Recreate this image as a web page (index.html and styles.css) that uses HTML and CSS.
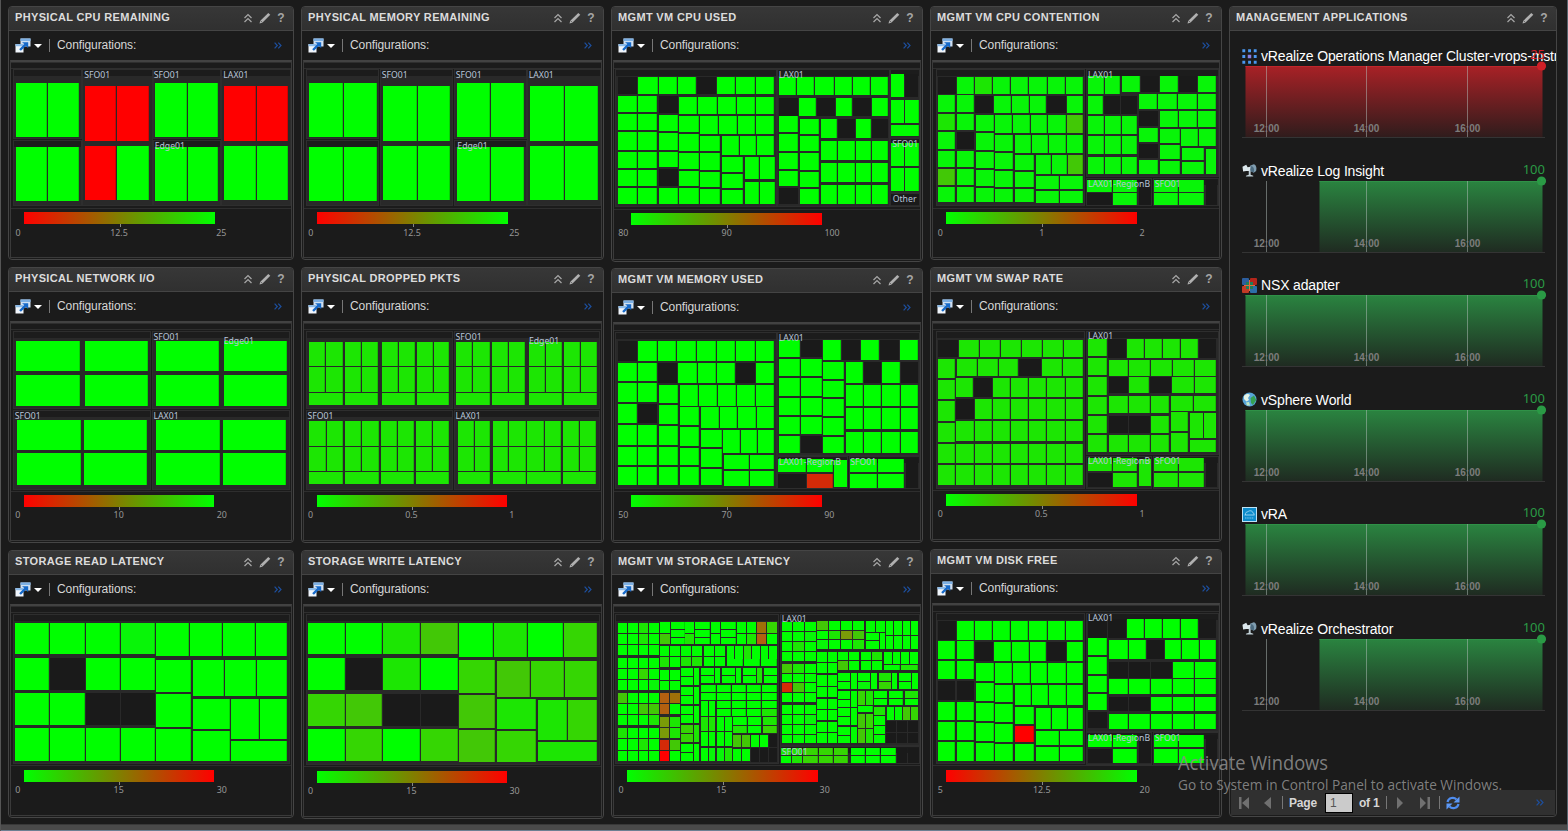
FILE: index.html
```html
<!DOCTYPE html>
<html lang="en">
<head>
<meta charset="utf-8">
<title>Management Cluster Dashboard</title>
<link rel="stylesheet" href="styles.css">
</head>
<body>
<svg class="defs" width="0" height="0">
  <symbol id="i-up" viewBox="0 0 10 10"><path d="M1.5 5 5 1.6 8.5 5M1.5 9 5 5.6 8.5 9" fill="none" stroke="#a6a6a6" stroke-width="1.3"/></symbol>
  <symbol id="i-pen" viewBox="0 0 12 12"><path d="M.5 11.5 1.3 8.800 9.300.9 11.3 2.700 3.300 10.700Z" fill="#b0b0b0"/><path d="M1.5 8.6 3.5 10.5" stroke="#555" stroke-width=".8"/></symbol>
  <symbol id="i-win" viewBox="0 0 16 15"><path d="M5.5.5h10v8h-10z" fill="#cfe0f2"/><path d="M5.5.5h10v2.6h-10z" fill="#7db0e4"/><path d="M.5 6h8v8.5h-8z" fill="#f1f6fc"/><path d="M.5 6h8v2.2h-8z" fill="#8dbbe8"/><path d="M4.2 11.3 9.3 6 7 4.2h6.2v6L11 7.800 5.900 12.800Z" fill="#1669c9"/></symbol>
  <symbol id="i-more" viewBox="0 0 8 7"><path d="M.6.6 3.300 3.500.6 6.400M4.300.6 7 3.500 4.300 6.400" fill="none" stroke="#1d4f9e" stroke-width="1.200"/></symbol>
  <symbol id="i-grid" viewBox="0 0 13 13"><g fill="#4a97ee"><path d="M.3.3h2.500v2.500H.3zM5.300.3h2.500v2.500H5.300zM10.200.3h2.500v2.500h-2.500zM.3 5.300h2.500v2.500H.3zM10.200 5.300h2.500v2.500h-2.500zM.3 10.200h2.500v2.500H.3zM5.300 10.200h2.500v2.500H5.300zM10.200 10.200h2.500v2.500h-2.500z"/></g><path d="M5 5h3v3H5z" fill="#8a7fe0"/></symbol>
  <symbol id="i-dish" viewBox="0 0 16 14"><path d="M8.500 2 12.500.3C15 1 16 4 15 7.500L12.500 9.500 8 7Z" fill="#7f9db0"/><path d="M9 2.500C12 2 13.500 4.500 12.500 9L8.500 7.500Z" fill="#4d6c80"/><path d="M.5 3 4.500.800 6 3.500 9 3 8.500 7.500 4.500 7.500 1.200 8Z" fill="#dce7ec"/><path d="M7.200 7h2v4.500l2.800 1.200v.800H4.200v-.800l3-1.200Z" fill="#c2d1d8"/></symbol>
  <symbol id="i-nsx" viewBox="0 0 15 15"><rect width="7" height="7" rx="1" fill="#2c5e9e"/><rect x="8" width="7" height="7" rx="1" fill="#b3261b"/><rect y="8" width="7" height="7" rx="1" fill="#c33a25"/><rect x="8" y="8" width="7" height="7" rx="1" fill="#2d6fa8"/><path d="M4 4h7v7H4z" fill="#1f7f58"/><path d="M7.500 2v11M2 7.500h11" stroke="#e26a3c" stroke-width="1"/></symbol>
  <symbol id="i-globe" viewBox="0 0 15 15"><circle cx="7.500" cy="7.500" r="7" fill="#58a5d8"/><path d="M2 4C4 1.500 7 1.500 8 3L6 6 7 8 4.500 9.500 2 7Z" fill="#e5f3e6"/><path d="M8.500 6 12 3.500 14.200 8 11 13 9 11Z" fill="#35a053"/><path d="M4 10.500 7 10 8 13.500 5 13.500Z" fill="#bfe5c4"/></symbol>
  <symbol id="i-vra" viewBox="0 0 15 15"><rect x=".5" y=".5" width="14" height="14" fill="#0d8bca" stroke="#bfe3f5"/><path d="M2.500 8h10M3.500 8C3 5.500 5 4.600 6 4.800 7.500 2.800 11 4 10.800 5.800 12.500 6 12 8 12 8" fill="none" stroke="#9fd8f3" stroke-width=".9"/><path d="M3 11h9" stroke="#7cc5ea" stroke-dasharray="1.500 .7"/></symbol>
</svg>
<main class="dash" id="dash"></main>
<div class="watermark">
  <svg width="340" height="50">
    <text x="0" y="20.500" font-size="19.500" textLength="150" lengthAdjust="spacingAndGlyphs">Activate Windows</text>
    <text x="0" y="40.500" font-size="14" textLength="324" lengthAdjust="spacingAndGlyphs">Go to System in Control Panel to activate Windows.</text>
  </svg>
</div>
<script src="app.js"></script>
</body>
</html>
```
FILE: styles.css
```css
* { box-sizing: border-box; }
body {
  margin: 0;
  height: 831px;
  overflow: hidden;
  background: #1b1b1b;
  border-left: 1px solid #555;
  border-right: 1px solid #55646e;
  font-family: "Liberation Sans", Arial, sans-serif;
  display: flex;
  flex-direction: column;
  position: relative;
}
body::after {
  content: "";
  height: 5px;
  background: #4a4a4a;
  border-top: 1px solid #383838;
  border-bottom: 1px solid #6d7f92;
}
.defs { position: absolute; }
.dash {
  flex: 1;
  padding: 6px 0 0 7px;
  display: grid;
  grid-template-columns: 286px 303px 312px 292px 328px;
  column-gap: 7px;
  align-items: start;
  min-height: 0;
}
.column { display: flex; flex-direction: column; }
.panel {
  border: 1px solid #454545;
  border-radius: 4px;
  background: #1b1b1b;
  display: flex;
  flex-direction: column;
  overflow: hidden;
}
.head {
  height: 24px;
  flex: none;
  padding: 0 8px 3px 6px;
  background: linear-gradient(#373737, #303030);
  border-bottom: 1px solid #444;
  display: flex;
  align-items: center;
}
.title { flex: 1; font-size: 11px; font-weight: bold; letter-spacing: .34px; color: #dcdcdc; white-space: nowrap; }
.tools { display: flex; align-items: center; gap: 6px; padding-top: 1px; }
.help { font-size: 12px; font-weight: bold; line-height: 12px; color: #a6a6a6; width: 8px; text-align: center; }
.bar {
  height: 29px;
  flex: none;
  padding: 0 11px 1px 6px;
  display: flex;
  align-items: center;
  color: #d6d6d6;
  font-size: 12px;
  letter-spacing: -.1px;
}
.caret { margin: 2px 0 0 3px; border: 4px solid transparent; border-top-color: #fff; border-bottom: 0; }
.sep { width: 1px; height: 13px; margin: 0 6px 0 7px; background: #777; }
.bar .sep { margin-right: 7px; }
.grow { flex: 1; }
.chart {
  flex: 1;
  margin: 0 1px 1px;
  min-height: 0;
  border: 1px solid #3a3a3a;
  border-top: 2px solid #424242;
  overflow: hidden;
}
.chart svg { display: block; }
.map-label { font: 8.7px "Noto Sans", sans-serif; fill: #b9c6da; }
.axis { font: 8.9px "Noto Sans", sans-serif; fill: #979797; text-anchor: middle; }
.apps { height: 811px; }
.app-list { flex: 1; padding: 14px 0 0 12px; min-height: 0; }
.app { height: 114.5px; }
.app-head { height: 21px; padding-top: 1px; display: flex; align-items: center; gap: 4px; color: #fff; font-size: 14px; letter-spacing: -.15px; white-space: nowrap; position: relative; }
.app-head svg { flex: none; }
.score { position: absolute; top: 0; left: 240px; width: 63px; text-align: right; font: 13px/18px "Noto Sans", sans-serif; letter-spacing: 0; color: #2a9a45; }
.score.bad { color: #d3212b; }
.app-chart { display: block; overflow: visible; }
.time { font-size: 10px; font-weight: bold; fill: #7c7c7c; text-anchor: middle; }
.pager {
  height: 25px;
  flex: none;
  margin: 0 1px 1px;
  padding: 0 11px 0 7px;
  background: #303030;
  display: flex;
  align-items: center;
  color: #d6d6d6;
  font-size: 12px;
  font-weight: bold;
  letter-spacing: -.2px;
}
.page-box { width: 28px; height: 20px; margin: 0 6px 0 8px; padding: 2px 4px; background: #cbcbcb; border: 1px solid #000; color: #555; font-weight: normal; }
.pager .sep { margin: 0 6px 0 8px; }
.watermark { position: absolute; left: 1177px; top: 749px; font-family: "Open Sans", sans-serif; pointer-events: none; }
.watermark text { fill: #8c8c8c; fill-opacity: .9; }
```
FILE: app.js
```js
// Heat-map cell colours by key.
const COLORS = {
  g: '#00ff00', n: '#08f508', h: '#1ce603', p: '#35d603', o: '#42c806',
  x: '#7a9c08', v: '#a07008', u: '#b26010', d: '#d42a08', r: '#ff0000', k: '#1a1a1a'
};

// A widget's cells are listed one strip per line:
//   R top bottom edges... keys   a row of cells
//   C left right edges... keys   a column of cells
//   G left top right bottom columns rows keys   an even grid
//   F left top right bottom      a group frame
// ox/oy is the origin and sx the number of units per pixel across (3 down).
const W = [
 [
  { t:'PHYSICAL CPU REMAINING', x:8,y:6,w:286,h:254, ox:0,oy:0,sx:3, line:625,
    l:[[253,232,'SFO01'],[461,232,'SFO01'],[670,232,'LAX01'],[464,446,'Edge01']],
    s:[71,645,637,'r','0',54,'12.5',357,'25',664,706],
    c:`F 38 207 243 415;F 38 420 243 615;F 247 207 455 615;F 459 207 660 415;F 459 420 660 615;F 664 207 870 615
R 249 411 48 145 241 gg;R 441 603 48 145 241 gg;R 258 423 256 352 450 rr;R 438 601 256 352 450 rg
R 249 411 466 564 658 gg;R 441 603 466 564 658 gg;R 258 423 671 771 867 rr;R 438 601 671 771 867 gg` },
  { t:'PHYSICAL NETWORK I/O', x:8,y:267,w:286,h:276, ox:0,oy:262,sx:2.579, line:686,
    l:[[396,231,'SFO01'],[577,243,'Edge01'],[38,469,'SFO01'],[396,469,'LAX01']],
    s:[61,553,699,'r','0',46,'10',306,'20',572,768],
    c:`F 34 206 388 438;F 391 206 746 438;F 34 443 388 680;F 391 443 746 680
R 236 327 42 209 g;R 236 327 218 385 g;R 236 327 402 567 g;R 236 327 578 743 g;R 339 431 42 209 g;R 339 431 218 385 g;R 339 431 402 567 g;R 339 431 578 743 g
R 474 564 45 211 g;R 474 564 217 382 g;R 474 564 402 569 g;R 474 564 575 741 g;R 574 668 45 211 g;R 574 668 217 382 g;R 574 668 402 569 g;R 574 668 575 741 g` },
  { t:'STORAGE READ LATENCY', x:8,y:550,w:286,h:268, ox:0,oy:545,sx:2.579, line:661,
    l:[], s:[61,553,675,'g','0',46,'15',306,'30',572,743],
    c:`F 34 206 746 655
R 234 328 38 129 221 311 402 gggn;R 234 334 402 489 576 660 743 gggg;R 340 434 38 129 221 311 402 gkgg
R 445 540 38 129 221 311 402 ggkk;R 549 647 38 129 221 311 402 gggg;C 402 493 345 448 552 653 ggg
R 345 452 497 580 664 743 ggg;C 497 593 463 557 653 gg;R 463 581 597 671 743 gg;R 589 647 597 743 g` }
 ],
 [
  { t:'PHYSICAL MEMORY REMAINING', x:301,y:6,w:303,h:254, ox:295,oy:0,sx:3, line:625,
    l:[[260,232,'SFO01'],[482,232,'SFO01'],[701,232,'LAX01'],[487,446,'Edge01']],
    s:[65,638,637,'r','0',47,'12.5',351,'25',658,706],
    c:`F 32 207 250 415;F 32 420 250 615;F 255 207 472 615;F 476 207 692 415;F 476 420 692 615;F 696 207 916 615
R 249 411 42 147 249 gg;R 441 603 42 147 249 gg;R 258 423 264 369 468 gg;R 438 601 264 369 468 gg
R 249 411 486 588 690 gg;R 441 603 486 588 690 gg;R 258 423 705 810 912 gg;R 438 601 705 810 912 gg` },
  { t:'PHYSICAL DROPPED PKTS', x:301,y:267,w:303,h:276, ox:0,oy:262,sx:2.579, line:686,
    l:[[1175,231,'SFO01'],[1364,243,'Edge01'],[793,469,'SFO01'],[1175,469,'LAX01']],
    s:[817,1308,699,'g','0',801,'0.5',1061,'1',1320,768],
    c: 'F 790 206 1165 438;F 1170 206 1545 438;F 790 443 1165 680;F 1170 443 1545 680;' +
      [[797,841,886],[889,933,977],[984,1028,1072],[1075,1118,1161],[1177,1221,1266],[1269,1312,1356],[1365,1407,1451],[1455,1498,1543]]
        .map(([a,b,c]) => `R 241 312 ${a} ${b} ${c} hh;R 316 390 ${a} ${b} ${c} hh;R 393 429 ${a} ${c} h`).join(';') + ';' +
      [[797,843,888],[891,934,980],[982,1026,1070],[1073,1117,1161],[1180,1225,1267],[1271,1314,1358],[1360,1405,1449],[1452,1496,1540]]
        .map(([a,b,c]) => `R 477 551 ${a} ${b} ${c} hh;R 555 628 ${a} ${b} ${c} hh;R 631 665 ${a} ${c} h`).join(';') },
  { t:'STORAGE WRITE LATENCY', x:301,y:550,w:303,h:269, ox:0,oy:545,sx:2.579, line:664,
    l:[], s:[817,1308,678,'g','0',801,'15',1061,'30',1327,745],
    c:`F 790 206 1545 658
R 234 328 794 892 989 1085 1183 ggho;R 234 337 1183 1274 1363 1454 1543 ghgp;R 340 434 794 892 989 1085 1183 gkhg
R 446 544 794 892 989 1085 1183 pokk;R 552 649 794 892 989 1085 1183 gpgp;C 1183 1277 346 451 555 656 poo
R 349 455 1281 1370 1456 1543 opp;C 1281 1382 463 559 656 hp;R 466 584 1387 1466 1543 hp;R 592 649 1387 1543 h` }
 ],
 [
  { t:'MGMT VM CPU USED', x:611,y:6,w:312,h:256, ox:608,oy:0,sx:3, line:628,
    l:[[512,232,'LAX01'],[853,439,'SFO01'],[854,605,'Other']],
    s:[69,643,640,'g','80',46,'90',356,'100',672,708],
    c:`F 22 207 504 618;F 507 207 843 618;F 846 207 934 412;F 846 415 934 577;F 846 580 934 618
R 231 282 30 90 153 210 267 327 385 444 500 kgggkggg;R 291 343 213 271 330 388 444 500 ggggg
C 30 87 289 343 397 455 510 564 618 gggggg;C 90 147 289 343 397 455 510 564 618 gggggg;C 153 210 289 345 400 455 508 564 618 kgggkg
C 213 273 348 403 458 513 564 618 ggggg;R 348 403 276 333 391 444 500 gggg;C 276 336 409 460 515 566 618 gggg
R 409 466 342 396 447 502 ggg;C 342 405 472 521 569 618 ggg;R 472 537 411 456 503 gg;R 546 612 411 456 503 gg
R 231 285 514 568 622 681 735 789 843 gggggg;R 294 349 514 573 627 684 735 792 843 kgkgkg;C 514 570 348 403 459 513 564 618 ggggk
C 576 633 358 409 460 515 567 618 ggggg;R 358 415 639 690 743 792 843 gkgk;R 424 481 639 691 743 792 843 gggg
R 489 546 639 691 743 792 843 gggg;R 555 612 639 691 743 792 843 gggg
R 222 291 849 891 934 gk;R 300 369 849 891 935 gg;R 376 408 849 935 g;R 430 497 849 891 935 gg;R 504 573 849 891 935 gg;R 583 616 849 935 k` },
  { t:'MGMT VM MEMORY USED', x:611,y:268,w:312,h:275, ox:608,oy:262,sx:3, line:686,
    l:[[512,234,'LAX01'],[512,607,'LAX01-RegionB'],[727,607,'SFO01']],
    s:[69,643,699,'g','50',46,'70',356,'90',664,766],
    c:`F 22 210 504 678;F 508 210 934 578;F 508 583 717 678;F 722 583 934 678
R 238 296 30 90 150 208 267 326 385 444 500 kggggggg;C 30 87 303 364 427 490 554 616 676 gggggg;C 90 147 303 364 427 490 554 616 676 ggkggg
R 303 362 150 210 270 328 385 444 500 kgggkg;C 153 210 370 430 493 555 616 676 ggggg;R 370 431 216 273 330 387 444 500 ggggg
C 216 273 435 496 557 614 676 gggg;R 435 499 279 336 391 447 500 gggg;C 279 342 504 562 620 676 ggg
R 504 573 345 399 450 502 ggg;R 579 621 348 425 500 gg;R 627 671 348 425 500 gg
C 514 576 233 291 348 408 465 521 580 gggggg;C 580 642 233 291 348 408 465 521 580 kggggk;R 233 293 645 703 760 817 876 932 gkgkg
C 645 708 300 357 411 467 525 580 ggggg;R 300 362 714 768 822 878 932 gkgk;R 370 433 714 768 822 878 932 gggg
R 439 502 714 768 822 878 932 gggg;R 510 574 714 768 822 878 932 gggg
R 592 630 511 597 678 gg;R 636 677 511 597 678 kd;C 678 716 595 681 g;R 592 630 726 810 891 gg;R 636 677 726 810 891 gg;R 588 677 894 933 k` },
  { t:'MGMT VM STORAGE LATENCY', x:611,y:550,w:312,h:268, ox:608,oy:545,sx:3, line:661,
    l:[[521,230,'LAX01'],[521,628,'SFO01']],
    s:[57,629,675,'g','0',39,'15',340,'30',650,743],
    c:`F 22 206 510 655;F 515 206 934 600;F 515 604 934 655
G 30 234 152 330 4 3 gghggghggggg;G 30 340 152 436 4 3 ggggggpggggn;G 30 444 152 541 4 3 ogggggoogggh;G 30 549 152 648 4 3 hggggghggggg
G 155 231 186 298 1 2 go;G 188 231 230 298 1 3 ggg;G 232 231 259 298 1 2 gh;G 262 231 306 298 1 3 ggg;G 309 231 336 298 1 2 gg
G 339 231 383 298 1 3 ggg;G 387 231 443 298 2 2 gggh;G 447 231 506 298 2 2 vpug
G 155 303 216 366 2 2 gghg;G 219 303 282 333 2 1 gg;G 219 336 282 364 2 1 hh;G 288 303 352 333 2 1 gg;G 288 336 352 364 2 1 gg
G 357 303 404 341 2 1 gg;G 357 343 404 364 1 1 g;G 407 303 455 341 2 1 hg;G 407 343 455 364 1 1 g;G 459 303 506 341 2 1 gg;G 459 343 506 364 1 1 g
G 155 375 216 436 2 2 gggg;G 219 369 256 420 1 2 gg;G 259 369 274 420 1 1 g;G 279 369 318 414 1 2 gg;G 320 369 336 414 1 1 g
G 342 369 382 414 1 2 gg;G 384 369 400 414 1 1 g;G 405 369 444 414 1 2 gg;G 446 369 462 414 1 1 h;G 467 369 506 414 1 2 gg
G 219 426 256 478 1 2 gg;G 259 426 274 478 1 1 g;G 219 484 256 535 1 2 gg;G 259 484 274 535 1 1 g;G 219 541 256 590 1 2 pp;G 259 541 274 590 1 1 h
G 219 598 256 648 1 2 gg;G 259 598 274 648 1 1 g;G 155 444 216 508 2 2 uvug;G 155 515 216 579 2 2 xhxh;G 155 585 216 648 2 2 dorg
G 279 420 323 466 1 2 gg;G 326 420 413 466 2 2 gggg;G 416 420 506 466 2 2 gggg;G 279 468 321 513 2 1 gg;G 326 468 413 513 2 2 gggg
G 416 468 506 513 2 2 gggh;G 279 516 321 557 2 1 hh;G 326 516 372 557 2 1 gg;G 376 516 460 564 2 2 gghg;G 464 516 506 564 1 2 hp
G 279 561 321 603 2 1 gg;G 326 561 372 603 2 1 gg;G 376 570 425 606 2 1 oo;G 430 570 480 606 2 1 gg;G 483 567 506 606 1 1 k
G 279 608 321 648 2 1 gn;G 326 608 372 648 2 1 nh;G 376 612 425 648 2 1 gg;G 429 609 506 652 3 1 kkk
G 521 231 624 348 3 4 gggggnghgggg;G 521 357 624 470 3 4 ohggggdogggg;G 521 480 624 595 3 4 gggggngggggg
G 628 228 696 312 2 3 ogghng;G 700 228 768 312 2 3 ggxogh;G 774 228 831 260 2 1 gg;G 774 263 812 286 1 1 g;G 774 289 812 312 1 1 g
G 815 263 831 312 1 1 g;G 834 228 881 312 2 2 gggg;G 884 228 929 312 2 2 gggg
G 628 320 687 385 2 2 gggg;G 691 320 754 375 2 2 ggog;G 758 320 822 375 2 2 ghgg;G 828 320 929 357 4 1 gggg;G 828 360 929 375 2 1 gh
G 628 390 687 457 2 2 gggg;G 628 461 687 525 2 2 gggg;G 628 530 687 595 2 2 gggg
G 689 384 726 432 1 2 gg;G 728 384 746 432 1 1 g;G 751 384 785 432 1 2 gn;G 788 384 806 432 1 1 g;G 812 384 850 432 1 2 hp;G 852 384 868 432 1 1 g
G 873 384 909 432 1 2 gg;G 911 384 929 432 1 1 g;G 689 438 726 486 1 2 gg;G 728 438 746 486 1 1 g;G 689 490 726 541 1 2 gg;G 728 490 746 541 1 1 g
G 689 546 726 595 1 2 gg;G 728 546 746 595 1 1 g;G 751 438 795 480 2 1 ph;G 797 438 838 480 1 2 gg;G 842 438 886 480 1 2 gg;G 890 438 929 480 1 2 hg
G 751 484 795 500 1 1 g;G 751 506 795 549 2 1 op;G 751 553 795 595 2 1 oh;G 797 486 831 595 1 4 hggg;G 837 486 881 526 2 1 gg
G 886 486 929 526 2 1 op;G 834 529 930 595 3 2 kkkkkk
G 519 609 583 653 2 2 hhgh;G 586 609 720 653 3 2 pppppp;G 729 609 863 653 3 2 gggggg;G 866 608 932 653 2 1 kk` }
 ],
 [
  { t:'MGMT VM CPU CONTENTION', x:930,y:6,w:292,h:254, ox:926,oy:0,sx:3, line:625,
    l:[[486,232,'LAX01'],[486,560,'LAX01-RegionB'],[686,560,'SFO01']],
    s:[60,633,637,'g','0',43,'1',347,'2',648,706],
    c:`F 30 207 474 615;F 480 207 876 527;F 480 535 676 615;F 680 535 876 615
R 231 282 36 93 147 201 255 309 366 420 474 knhnnnnn;C 35 87 286 342 397 453 507 561 613 nhnnon;C 93 144 286 342 397 453 507 561 613 nnknnn
R 288 339 147 204 258 312 363 423 474 knnnkn;C 150 204 346 400 455 510 564 613 nnnnn;R 346 399 207 261 315 366 422 474 nnnno
C 207 261 406 459 513 568 613 nnnn;R 405 460 267 318 370 423 474 nnnn;C 267 324 466 516 568 613 nnn;R 466 522 330 378 427 474 nno
R 529 567 330 402 474 nn;R 573 609 330 402 474 nn
R 228 282 486 537 585 nn;R 228 275 588 645 702 758 816 874 nknkn;R 288 341 486 534 585 636 nkk;R 282 328 639 696 756 816 874 nnnn
R 348 402 486 537 588 636 nnn;R 408 462 486 537 588 636 nnn;R 471 522 486 537 588 636 nnn;C 639 696 334 384 432 481 528 knkn
R 334 381 702 759 817 874 nnn;C 702 762 388 436 483 528 nnn;R 388 438 765 819 874 nn;C 768 834 444 486 528 nn;C 840 870 447 528 n
R 540 576 484 561 636 nn;R 580 614 484 561 636 kn;R 540 614 639 677 k;R 540 576 683 759 837 nn;R 580 614 683 759 837 nn;R 540 614 840 876 k` },
  { t:'MGMT VM SWAP RATE', x:930,y:267,w:292,h:275, ox:926,oy:262,sx:3, line:683,
    l:[[486,230,'LAX01'],[486,605,'LAX01-RegionB'],[686,605,'SFO01']],
    s:[60,633,697,'g','0',43,'0.5',346,'1',648,764],
    c:`F 30 207 474 678;F 480 207 876 577;F 480 581 676 678;F 680 581 876 678
R 234 285 36 99 162 225 288 351 414 474 khhhhhh;C 35 87 292 354 418 484 547 610 675 hhhhhh;R 291 342 93 156 219 280 348 411 474 hhhkhh
R 348 405 90 144 201 255 309 363 419 474 hkhhhhh;R 412 471 90 147 201 255 309 363 419 474 khhhhhh;R 478 538 90 147 201 255 309 363 419 474 hhhhhhh
R 546 604 90 147 201 255 309 363 419 474 hhhhhhh;R 610 668 90 147 201 255 309 363 419 474 hhhhhhh
C 486 543 231 288 346 404 462 519 577 hhhhhh;R 231 288 546 602 657 711 765 818 874 khhhhk;R 294 342 548 610 676 742 808 873 hhhhh
R 346 394 548 610 672 739 808 873 khkhh;R 403 454 548 610 674 731 hhh;R 403 446 735 805 873 hh;R 461 513 548 610 674 731 kkh
C 735 786 451 514 576 hh;R 454 528 792 834 873 hh;R 534 570 792 873 h;R 520 570 548 610 674 731 hhh
R 588 627 486 561 636 hh;R 633 675 486 561 636 kh;C 639 675 591 677 h;R 588 627 683 759 837 hh;R 633 675 683 759 837 hh;R 588 675 840 876 k` },
  { t:'MGMT VM DISK FREE', x:930,y:549,w:292,h:269, ox:926,oy:545,sx:3, line:661,
    l:[[486,227,'LAX01'],[486,587,'LAX01-RegionB'],[686,587,'SFO01']],
    s:[60,633,675,'r','5',43,'12.5',347,'20',656,743],
    c:`F 30 204 474 655;F 480 204 876 557;F 480 562 676 656;F 680 562 876 656
R 228 285 36 93 147 201 255 309 366 420 474 kggggggg;C 35 87 289 349 408 472 532 592 653 ggkggg;C 93 144 289 349 408 472 532 592 653 ggkggg
R 291 348 147 204 258 312 363 423 474 kgggkg;C 150 204 355 415 474 535 595 653 ggggg;R 354 415 207 261 315 366 422 474 ggggg
C 207 261 420 478 538 596 653 gggg;R 420 481 267 318 370 423 474 gggg;C 267 324 487 543 598 653 grg;R 489 552 330 378 427 474 ggg
R 558 601 330 402 474 gg;R 606 647 330 402 474 gg
R 222 279 486 546 602 657 711 765 818 874 kkggggk;C 486 543 280 335 392 448 500 555 ggggk;R 286 342 548 610 664 717 768 822 873 ggkggg
R 351 398 548 610 676 742 808 873 kkkgg;R 403 448 548 610 676 742 808 873 ggggg;R 455 499 548 610 676 742 808 873 kkggg
R 506 551 548 610 676 742 808 873 ggggg
R 570 606 486 561 636 gg;R 612 654 486 561 636 kg;R 570 654 639 677 k;R 570 606 683 759 837 gg;R 612 654 683 759 837 gg;R 570 654 840 876 k` }
 ]
];

const icon = (id, w, h) => `<svg width="${w}" height="${h}"><use href="#i-${id}"/></svg>`;
const head = t => `<div class="head"><span class="title">${t}</span><span class="tools">${icon('up', 10, 10)}${icon('pen', 12, 12)}<span class="help">?</span></span></div>`;

function drawMap(d) {
  const px = v => Math.round(d.ox + v / d.sx);
  const py = v => Math.round(d.oy + v / 3);
  const left = d.x + 3, top = d.y + 56, width = d.w - 6, height = d.h - 60;
  let frames = '', cells = '';
  const cell = (x1, y1, x2, y2, k) => {
    if (k === 'k') cells += `<rect x="${x1}" y="${y1}" width="${x2 - x1}" height="${y2 - y1}" fill="${COLORS.k}"/>`;
    else cells += `<rect x="${x1}" y="${y1}" width="${x2 - x1}" height="${y2 - y1}" fill="${COLORS[k]}"/>`
      + (x2 - x1 > 13 ? `<path d="M${x2 - .5} ${y1}V${y2}" stroke="#000" stroke-opacity=".16" fill="none"/>` : '');
  };
  d.c.split(/[;\n]+/).forEach(line => {
    const a = line.trim().split(/\s+/), op = a.shift();
    if (!op) return;
    const keys = op === 'F' ? '' : a.pop(), n = a.map(Number);
    if (op === 'F') {
      const x = px(n[0]), y = py(n[1]), w = px(n[2]) - x, h = py(n[3]) - y;
      frames += `<rect x="${x + .5}" y="${y + .5}" width="${w}" height="${h}" fill="#1c1c1c" stroke="#2e2e2e"/>`
        + `<rect x="${x + 1}" y="${y + 7}" width="${w - 1}" height="${h - 7}" fill="#292929"/>`;
    } else if (op === 'R') {
      const e = n.slice(2).map(px);
      [...keys].forEach((k, i) => cell(e[i], py(n[0]), e[i + 1] - 1, py(n[1]), k));
    } else if (op === 'C') {
      const e = n.slice(2).map(py);
      [...keys].forEach((k, i) => cell(px(n[0]), e[i], px(n[1]), e[i + 1] - 2, k));
    } else {
      const [x1, y1, x2, y2, c, r] = n;
      const gx = i => px(x1 + (x2 + 3 - x1) * i / c), gy = i => py(y1 + (y2 + 3 - y1) * i / r);
      [...keys].forEach((k, i) => {
        const cx = i % c, cy = Math.floor(i / c);
        cell(gx(cx), gy(cy), gx(cx + 1) - 1, gy(cy + 1) - 1, k);
      });
    }
  });
  const [b1, b2, by, from, t1, x1, t2, x2, t3, x3, ty] = d.s;
  const id = 'ramp-' + d.x + '-' + d.y;
  const [ca, cb] = from === 'r' ? ['#f00', '#0f0'] : ['#0f0', '#f00'];
  const mid = Math.round((px(b1) + px(b2)) / 2) + .5;
  const text = (t, x) => `<text class="axis" x="${(d.ox + x / d.sx).toFixed(1)}" y="${py(ty + 1)}">${t}</text>`;
  return `<svg width="${width}" height="${height}" viewBox="${left} ${top} ${width} ${height}">
    <linearGradient id="${id}"><stop stop-color="${ca}"/><stop offset="1" stop-color="${cb}"/></linearGradient>
    <path d="M${left} ${top + .5}H${left + width}M${left} ${top + 6.5}H${left + width}M${left} ${py(d.line) + .5}H${left + width}" stroke="#2e2e2e"/>
    ${frames}${cells}
    ${d.l.map(([x, y, t]) => `<text class="map-label" x="${(d.ox + x / d.sx).toFixed(1)}" y="${py(y + 2)}">${t}</text>`).join('')}
    <rect x="${px(b1)}" y="${py(by)}" width="${px(b2) - px(b1)}" height="12" fill="url(#${id})"/>
    <path d="M${mid} ${py(by) + 12}v3" stroke="#888"/>
    ${text(t1, x1)}${text(t2, x2)}${text(t3, x3)}
  </svg>`;
}

const panel = d => `<section class="panel" style="height:${d.h}px;margin-top:${d.gap}px">${head(d.t)}
  <div class="bar">${icon('win', 16, 15)}<span class="caret"></span><span class="sep"></span>Configurations:<span class="grow"></span>${icon('more', 8, 7)}</div>
  <div class="chart">${drawMap(d)}</div></section>`;

const APPS = [
  ['vRealize Operations Manager Cluster-vrops-mstr', 'grid', 13, 13, 25, 0],
  ['vRealize Log Insight', 'dish', 16, 14, 100, 74],
  ['NSX adapter', 'nsx', 15, 15, 100, 0],
  ['vSphere World', 'globe', 15, 15, 100, 0],
  ['vRA', 'vra', 15, 15, 100, 0],
  ['vRealize Orchestrator', 'dish', 16, 14, 100, 74]
];

function app([name, ic, w, h, score, start]) {
  const bad = score < 50, c = bad ? '#cf2027' : '#2a9a45';
  const x = 3.5 + start;
  return `<div class="app"><div class="app-head"><svg width="15" height="15" viewBox="0 0 ${w} ${h}"><use href="#i-${ic}" width="${w}" height="${h}"/></svg><span>${name}</span><span class="score ${bad ? 'bad' : ''}">${score}</span></div>
  <svg class="app-chart" width="304" height="73">
    <linearGradient id="area-${score}" x2="0" y2="1"><stop stop-color="${bad ? '#a82126' : '#2a8440'}"/><stop offset="1" stop-color="${bad ? '#2e1c1c' : '#1f2a21'}"/></linearGradient>
    <rect x="${x}" y="0" width="${300.5 - x}" height="72" fill="url(#area-${score})"/>
    <path d="M${x} .5H300" stroke="${bad ? '#c0262b' : '#2f9147'}"/>
    <path d="M24.500 0V72M124.500 0V72M225.500 0V72" stroke="#b4c0bc" stroke-opacity=".5"/>
    <path d="M0 71.500H303" stroke="#343434"/>
    <circle cx="299.500" cy="0" r="4.600" fill="${c}"/>
    <text class="time" x="24.500" y="65.500">12:00</text><text class="time" x="124.500" y="65.500">14:00</text><text class="time" x="225.500" y="65.500">16:00</text>
  </svg></div>`;
}

const arrow = (d, m) => `<svg width="12" height="12" style="margin-left:${m}px"><path d="${d}" fill="#707070"/></svg>`;
const pager = `<div class="pager">${arrow('M1 0h2.500v12H1zM11 0v12L4 6z', 0)}${arrow('M9 0v12L2 6z', 12)}<span class="sep"></span>Page<span class="page-box">1</span>of 1<span class="sep" style="margin-left:7px"></span>
  ${arrow('M3 0v12l6-6z', 1)}${arrow('M1 0v12l6-6zM8.500 0H11v12H8.500z', 13)}<span class="sep"></span>
  <svg width="14" height="14" viewBox="0 0 14 14"><path d="M1.500 6C2.500 1.500 8 .8 10.500 3.500M12.500 8C11.500 12.500 6 13.200 3.500 10.500" fill="none" stroke="#4f8df0" stroke-width="2.200"/><path d="M13.500.5V6.500H7.500zM.5 13.500V7.500H6.500z" fill="#5c98f5"/></svg>
  <span class="grow"></span>${icon('more', 8, 7)}</div>`;

document.getElementById('dash').innerHTML = W.map(col => {
  let bottom = 6;
  return `<div class="column">${col.map(d => {
    d.gap = d.y - bottom;
    bottom = d.y + d.h;
    return panel(d);
  }).join('')}</div>`;
}).join('') + `<section class="panel apps">${head('MANAGEMENT APPLICATIONS')}<div class="app-list">${APPS.map(app).join('')}</div>${pager}</section>`;
```
